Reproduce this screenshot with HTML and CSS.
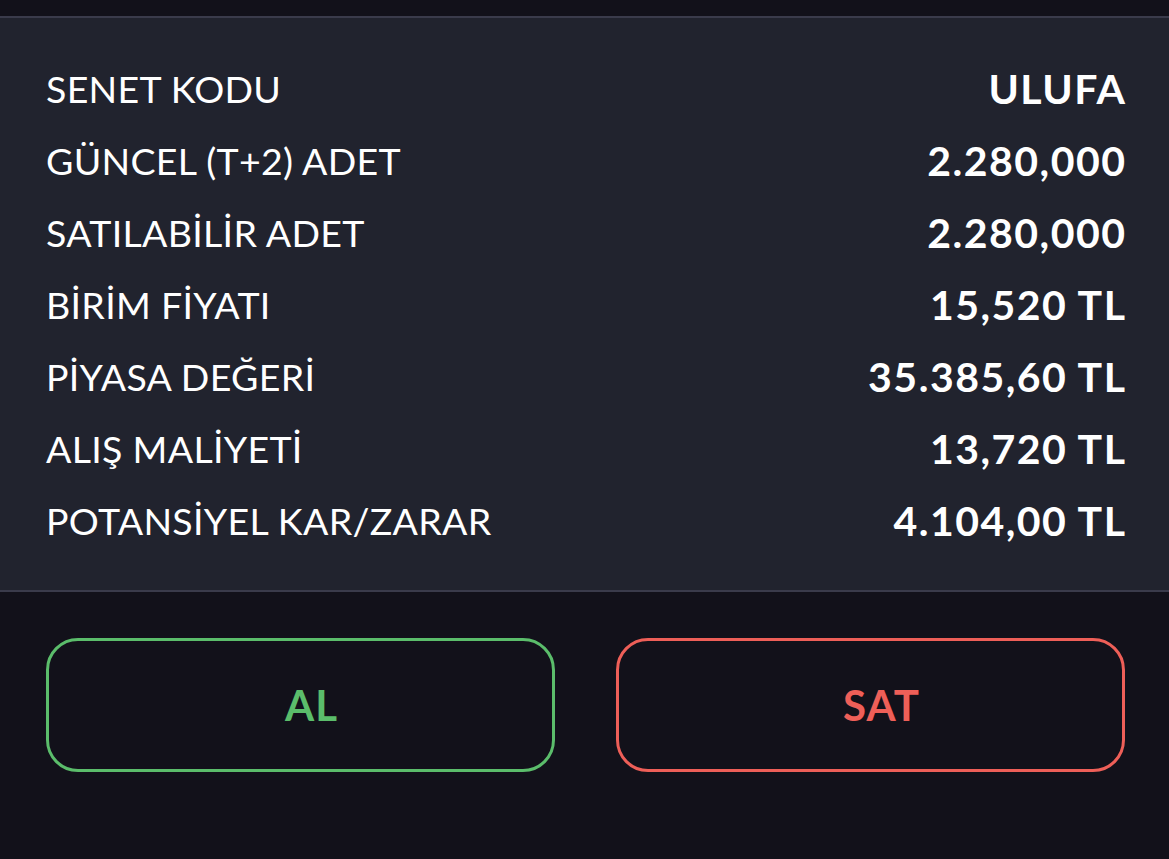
FILE: index.html
```html
<!DOCTYPE html>
<html lang="tr">
<head>
    <meta charset="UTF-8">
    <meta name="viewport" content="width=device-width, initial-scale=1.0">
    <title>Senet Detay</title>
    <link rel="stylesheet" href="styles.css">
</head>
<body>

    <div class="top-bar"></div>

    <section class="details">
        <div class="row"><span class="label">SENET KODU</span><span class="value">ULUFA</span></div>
        <div class="row"><span class="label">GÜNCEL (T+2) ADET</span><span class="value">2.280,000</span></div>
        <div class="row"><span class="label">SATILABİLİR ADET</span><span class="value">2.280,000</span></div>
        <div class="row"><span class="label">BİRİM FİYATI</span><span class="value">15,520 TL</span></div>
        <div class="row"><span class="label">PİYASA DEĞERİ</span><span class="value">35.385,60 TL</span></div>
        <div class="row"><span class="label">ALIŞ MALİYETİ</span><span class="value">13,720 TL</span></div>
        <div class="row"><span class="label">POTANSİYEL KAR/ZARAR</span><span class="value">4.104,00 TL</span></div>
    </section>

    <div class="actions">
        <button class="btn buy">AL</button>
        <button class="btn sell">SAT</button>
    </div>

</body>
</html>
```

FILE: styles.css
```css
body {
    margin: 0;
    padding: 0;
    background-color: #12111a;
    color: #fff;
    font-family: Lato, "Open Sans", sans-serif;
    height: 859px;
    overflow: hidden;
}
.top-bar {
    height: 16px;
    background-color: #12111a;
}
.details {
    background-color: #21232e;
    border-top: 2px solid #3a3b4b;
    border-bottom: 2px solid #3a3b4b;
    padding: 34px 44px 34px 46px;
}
.row {
    display: flex;
    justify-content: space-between;
    align-items: center;
    height: 72px;
}
.label {
    font-size: 37.5px;
    font-weight: 400;
    letter-spacing: 0.3px;
}
.value {
    font-size: 41px;
    font-weight: 700;
    letter-spacing: 1.5px;
    margin-right: -1.5px;
}
.actions {
    display: flex;
    gap: 61px;
    padding: 46px 44px 0 46px;
}
.btn {
    flex: 1;
    height: 134px;
    padding: 0 0 0 22px;
    background-color: transparent;
    border-radius: 32px;
    font-family: Lato, "Open Sans", sans-serif;
    font-size: 42px;
    font-weight: 700;
    letter-spacing: 1px;
    cursor: pointer;
}
.buy {
    border: 3px solid #5bbd6b;
    color: #5bbd6b;
}
.sell {
    border: 3px solid #ee5f58;
    color: #ee5f58;
}
```
